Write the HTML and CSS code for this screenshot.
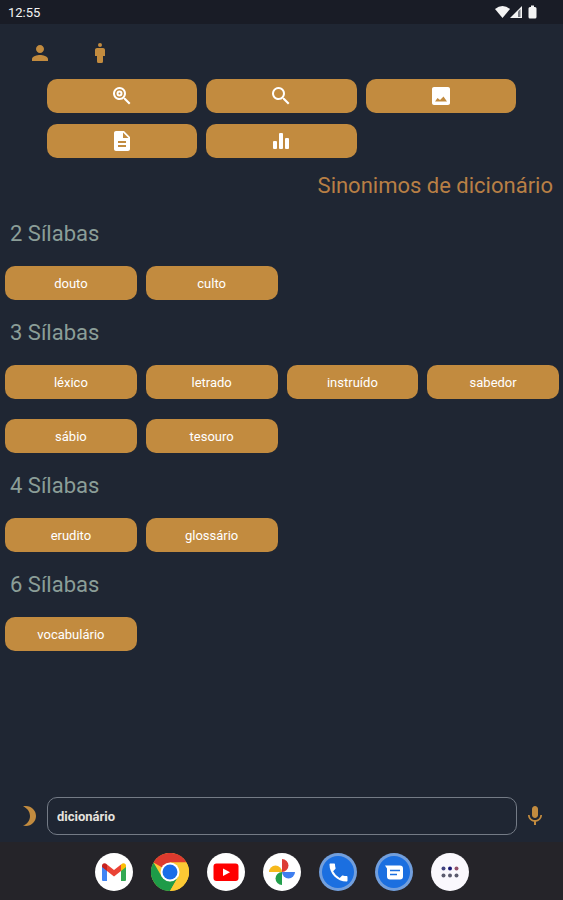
FILE: index.html
```html
<!DOCTYPE html>
<html lang="pt">
<head>
<meta charset="utf-8">
<meta name="viewport" content="width=device-width, initial-scale=1">
<title>Sinonimos de dicionário</title>
<link rel="stylesheet" href="styles.css">
</head>
<body>
<header class="status">
  <span>12:55</span>
  <svg class="status-icons" viewBox="0 0 44 14" aria-hidden="true">
    <path d="M0 4Q7.500-2 15 4L7.500 13Z"/>
    <path d="M15 13L27 1V13Z"/>
    <path class="signal-gap" d="M23 6.500L25.500 4V12H23Z"/>
    <path d="M36 0.500h3v1.500h1q1.500 0 1.500 1.500v8.500q0 1.500-1.500 1.500h-5q-1.500 0-1.500-1.500V3.500q0-1.500 1.500-1.500h1z"/>
  </svg>
</header>
<main class="content">
  <nav class="modes">
    <button class="icon-button" aria-label="Perfil"><svg viewBox="0 0 24 24"><path d="M12 12c2.210 0 4-1.790 4-4s-1.790-4-4-4-4 1.790-4 4 1.790 4 4 4zm0 2c-2.670 0-8 1.340-8 4v2h16v-2c0-2.660-5.330-4-8-4z"/></svg></button>
    <button class="icon-button" aria-label="Pessoa"><svg viewBox="0 0 24 24"><circle cx="12" cy="4" r="2"/><path d="M15 7H9c-1.100 0-2 .9-2 2v6h2v5.500q0 1.500 1.500 1.500h3q1.500 0 1.500-1.500V15h2V9c0-1.100-.9-2-2-2z"/></svg></button>
  </nav>
  <div class="tools">
    <button class="tile" aria-label="Pesquisa exata"><svg viewBox="0 0 24 24"><path d="M15.500 14h-.79l-.28-.27A6.500 6.500 0 1 0 13.730 14.430l.27.28v.79l5 4.990L20.490 19zM9.500 14a4.500 4.500 0 1 1 0-9 4.500 4.500 0 0 1 0 9z"/><path d="M9.500 6.500a3 3 0 1 0 0 6 3 3 0 0 0 0-6zm0 2a1 1 0 1 1 0 2 1 1 0 0 1 0-2z" fill-rule="evenodd"/></svg></button>
    <button class="tile" aria-label="Pesquisar"><svg viewBox="0 0 24 24"><path d="M15.500 14h-.79l-.28-.27A6.500 6.500 0 1 0 13.730 14.430l.27.28v.79l5 4.990L20.490 19zM9.500 14a4.500 4.500 0 1 1 0-9 4.500 4.500 0 0 1 0 9z"/></svg></button>
    <button class="tile" aria-label="Imagem"><svg viewBox="0 0 24 24"><path d="M21 19V5c0-1.100-.9-2-2-2H5c-1.100 0-2 .9-2 2v14c0 1.100.9 2 2 2h14c1.100 0 2-.9 2-2zM8.500 14l2.500 2L14.500 12.500l3.500 5H6z"/></svg></button>
    <button class="tile" aria-label="Texto"><svg viewBox="0 0 24 24"><path d="M14 2H6c-1.100 0-2 .9-2 2v16c0 1.100.9 2 2 2h12c1.100 0 2-.9 2-2V8l-6-6zm2 16H8v-2h8v2zm0-4H8v-2h8v2zm-3-5V3.500L18.500 9H13z"/></svg></button>
    <button class="tile" aria-label="Estatísticas"><svg viewBox="0 0 24 24"><rect x="4" y="12" width="4" height="8" rx="1"/><rect x="10" y="4" width="4" height="16" rx="1"/><rect x="16" y="9" width="4" height="11" rx="1"/></svg></button>
  </div>
  <h1 class="title">Sinonimos de dicionário</h1>
  <section>
    <h2 class="heading">2 Sílabas</h2>
    <div class="words"><button class="tile">douto</button><button class="tile">culto</button></div>
  </section>
  <section>
    <h2 class="heading">3 Sílabas</h2>
    <div class="words"><button class="tile">léxico</button><button class="tile">letrado</button><button class="tile">instruído</button><button class="tile">sabedor</button><button class="tile">sábio</button><button class="tile">tesouro</button></div>
  </section>
  <section>
    <h2 class="heading">4 Sílabas</h2>
    <div class="words"><button class="tile">erudito</button><button class="tile">glossário</button></div>
  </section>
  <section>
    <h2 class="heading">6 Sílabas</h2>
    <div class="words"><button class="tile">vocabulário</button></div>
  </section>
</main>
<form class="search">
  <button type="button" class="icon-button" aria-label="Modo escuro"><svg viewBox="0 0 24 24"><path d="M9 2c-1.050 0-2.050.16-3 .46 4.060 1.270 7 5.060 7 9.540s-2.940 8.270-7 9.540c.95.3 1.950.46 3 .46 5.520 0 10-4.480 10-10S14.520 2 9 2z"/></svg></button>
  <input class="field" type="text" value="dicionário" aria-label="Palavra">
  <button type="button" class="icon-button" aria-label="Falar"><svg viewBox="0 0 24 24"><path d="M12 14c1.660 0 3-1.340 3-3V5c0-1.660-1.340-3-3-3S9 3.340 9 5v6c0 1.660 1.340 3 3 3z"/><path d="M17.300 11c0 3-2.540 5.100-5.300 5.100S6.700 14 6.700 11H5c0 3.410 2.720 6.230 6 6.720V21h2v-3.280c3.280-.48 6-3.300 6-6.720h-1.700z"/></svg></button>
</form>
<nav class="dock">
  <a href="#" aria-label="Gmail"><svg viewBox="0 0 38 38"><circle cx="19" cy="19" r="19" fill="#fff"/><path d="M7 13l5 4v11H8q-1 0-1-1z" fill="#4285f4"/><path d="M26 17l5-4v14q0 1-1 1h-4z" fill="#34a853"/><path d="M12 11.500l7 5.500 7-5.500V18l-7 5.500-7-5.500z" fill="#ea4335"/><path d="M7 13c0-3 3-3.500 5-1.500V18l-5-4z" fill="#c5221f"/><path d="M31 13c0-3-3-3.500-5-1.500V18l5-4z" fill="#fbbc04"/></svg></a>
  <a href="#" aria-label="Chrome"><svg viewBox="0 0 38 38"><circle cx="19" cy="19" r="19" fill="#fcc934"/><path d="M19 19L2.500 9.500A19 19 0 0 1 35.500 9.500H19z" fill="#dd3a2e"/><path d="M2.500 9.500A19 19 0 0 0 19 38L27.200 23.700 19 28.500 10.800 23.700z" fill="#1e9b48"/><path d="M19 9.500H35.500A19 19 0 0 1 19 38L27.200 23.700z" fill="#fcc934"/><circle cx="19" cy="19" r="9.500" fill="#fff"/><circle cx="19" cy="19" r="7.500" fill="#1a6de8"/></svg></a>
  <a href="#" aria-label="YouTube"><svg viewBox="0 0 38 38"><circle cx="19" cy="19" r="19" fill="#fff"/><rect x="6.500" y="10.500" width="25" height="17.500" rx="3" fill="#f00"/><path d="M16 15.500v7.500l7-3.750z" fill="#fff"/></svg></a>
  <a href="#" aria-label="Fotos"><svg viewBox="0 0 38 38"><circle cx="19" cy="19" r="19" fill="#fff"/><path d="M19 19V6a6.500 6.500 0 0 1 0 13z" fill="#dd3d35"/><path d="M19 19h13a6.500 6.500 0 0 1-13 0z" fill="#3f7ff0"/><path d="M19 19v13a6.500 6.500 0 0 1 0-13z" fill="#229f4c"/><path d="M19 19H6a6.500 6.500 0 0 1 13 0z" fill="#f6b91c"/></svg></a>
  <a href="#" aria-label="Telefone"><svg viewBox="0 0 38 38"><circle cx="19" cy="19" r="19" fill="#729fdd"/><circle cx="19" cy="19" r="16" fill="#1b6fe0"/><path transform="translate(7.500 7.500)" d="M6.620 10.790a15.150 15.150 0 0 0 6.590 6.590l2.200-2.200c.27-.27.67-.36 1.020-.24 1.120.37 2.330.57 3.570.57.55 0 1 .45 1 1V20c0 .55-.45 1-1 1C10.610 21 3 13.390 3 4c0-.55.45-1 1-1h3.500c.55 0 1 .45 1 1 0 1.250.2 2.450.57 3.570.11.35.03.74-.25 1.020z" fill="#fff"/></svg></a>
  <a href="#" aria-label="Mensagens"><svg viewBox="0 0 38 38"><circle cx="19" cy="19" r="19" fill="#729fdd"/><circle cx="19" cy="19" r="16" fill="#1b6fe0"/><path d="M10 12.500h15q3 0 3 3v8q0 3-3 3H15q-3 0-3-3v-8z" fill="#fff"/><path d="M15 17.500h10M15 21.500h7" stroke="#1b6fe0" stroke-width="1.500"/></svg></a>
  <a href="#" aria-label="Aplicativos"><svg viewBox="0 0 38 38"><circle cx="19" cy="19" r="19" fill="#faf8fd"/><circle cx="12.500" cy="15.500" r="2" fill="#414380"/><circle cx="19" cy="15.500" r="2" fill="#171776"/><circle cx="25.500" cy="15.500" r="2" fill="#93506a"/><g fill="#5b5b6e"><circle cx="12.500" cy="22.500" r="2"/><circle cx="19" cy="22.500" r="2"/><circle cx="25.500" cy="22.500" r="2"/></g></svg></a>
</nav>
</body>
</html>
```
FILE: styles.css
```css
* {
  box-sizing: border-box;
}

body {
  margin: 0;
  min-height: 100vh;
  display: flex;
  flex-direction: column;
  background: #1f2633;
  font-family: Roboto, sans-serif;
}

svg {
  display: block;
  fill: currentColor;
}

button {
  border: 0;
  padding: 0;
  font: inherit;
  cursor: pointer;
}

.status {
  display: flex;
  align-items: center;
  justify-content: space-between;
  height: 24px;
  padding: 0 24px 0 8px;
  background: #191c26;
  color: #f4f4f4;
  font-size: 13px;
}

.status-icons {
  width: 44px;
  height: 14px;
}

.signal-gap {
  fill: #777a82;
}

.content {
  flex: 1;
}

.modes {
  display: flex;
  gap: 36px;
  padding: 17px 28px 14px;
}

.icon-button {
  flex: none;
  width: 24px;
  height: 24px;
  background: none;
  color: #c28b3f;
}

.tools {
  display: grid;
  grid-template-columns: repeat(3, 1fr);
  gap: 11px 9px;
  padding: 0 47px;
}

.tile {
  display: flex;
  align-items: center;
  justify-content: center;
  height: 34px;
  border-radius: 10px;
  background: #c28b3f;
  color: #fff;
  font-size: 13px;
}

.tile svg {
  width: 24px;
  height: 24px;
}

.title {
  margin: 0;
  padding: 13px 10px 0;
  color: #b87f45;
  font-size: 22px;
  font-weight: 400;
  line-height: 30px;
  text-align: right;
}

.heading {
  margin: 0;
  padding: 0 10px;
  color: #8b9e98;
  font-size: 22px;
  font-weight: 400;
  line-height: 65px;
}

.words {
  display: grid;
  grid-template-columns: repeat(4, 1fr);
  gap: 20px 9px;
  padding: 0 4px 0 5px;
}

.search {
  display: flex;
  align-items: center;
  gap: 6px;
  padding: 7px 16px 7px 17px;
}

.field {
  flex: 1;
  min-width: 0;
  height: 38px;
  padding: 0 9px;
  border: 1px solid #747b86;
  border-radius: 10px;
  background: transparent;
  color: #e6e3df;
  font: 700 13px Roboto, sans-serif;
}

.dock {
  display: flex;
  justify-content: center;
  gap: 18px;
  padding: 11px 0 9px;
  background: #252429;
}

.dock svg {
  width: 38px;
  height: 38px;
}
```
